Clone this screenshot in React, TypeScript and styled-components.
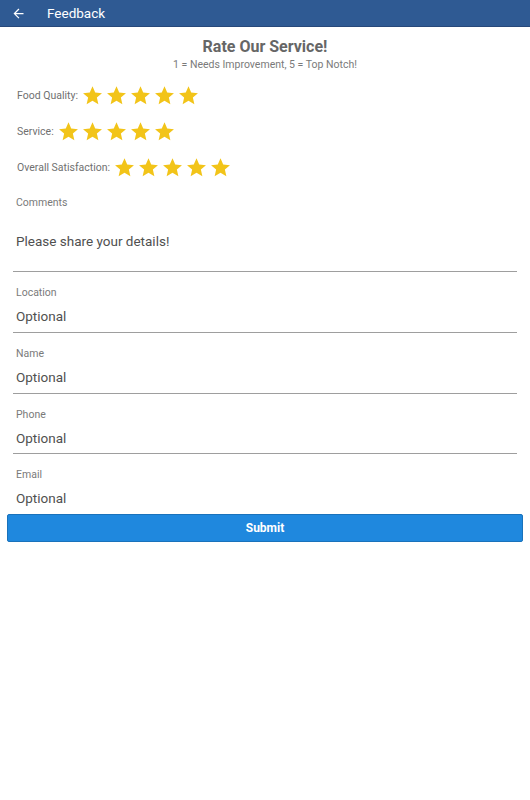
import React from 'react';
import styled, { createGlobalStyle } from 'styled-components';

const GlobalStyle = createGlobalStyle`
  body {
    margin: 0;
    background: #fff;
    font-family: Roboto, "Noto Sans", sans-serif;
  }
`;

const Page = styled.div`
  width: 530px;
  min-height: 800px;
  background: #fff;
`;

const TopBar = styled.div`
  height: 27px;
  background-color: #2f5a93;
  border-bottom: 1px solid #27487a;
  box-sizing: border-box;
  display: flex;
  align-items: center;
  padding-left: 11px;
  color: #fff;

  span {
    font-size: 13.5px;
    margin-left: 21px;
  }
`;

const Heading = styled.div`
  text-align: center;
  padding-top: 10px;

  h1 {
    margin: 0;
    font-size: 16px;
    font-weight: bold;
    color: #666;
    line-height: 20px;
  }

  p {
    margin: 1px 0 0;
    font-size: 10.5px;
    color: #7a7a7a;
    line-height: 14px;
  }
`;

const Ratings = styled.div`
  padding-top: 5px;
`;

const RatingRow = styled.div`
  display: flex;
  align-items: center;
  height: 36px;
  padding-left: 17px;
  font-size: 10.5px;
  color: #707070;
`;

const Stars = styled.div`
  display: flex;
  gap: 3px;
  margin-left: 4px;
`;

const Form = styled.div`
  padding: 0 13px;
`;

const Field = styled.div<{ $tall?: boolean; $last?: boolean; $height: number }>`
  border-bottom: ${p => (p.$last ? 'none' : '1px solid #9e9e9e')};
  padding-left: 3px;
  height: ${p => p.$height}px;
  box-sizing: border-box;
  display: flex;
  flex-direction: column;

  label {
    font-size: 10.5px;
    color: #7a7a7a;
    line-height: 14px;
    margin-top: ${p => (p.$tall ? '11px' : '14px')};
  }

  div {
    font-size: 13.5px;
    color: #505050;
    line-height: 18px;
    margin-top: ${p => (p.$tall ? '22px' : '7px')};
  }
`;

const SubmitButton = styled.button`
  display: block;
  margin: 0 7px;
  width: 516px;
  height: 28px;
  background: #1f88de;
  border: 1px solid #1a72bb;
  border-radius: 2px;
  color: #fff;
  font-family: Roboto, sans-serif;
  font-size: 12px;
  font-weight: bold;
`;

const Star = () => (
  <svg width="21" height="21" viewBox="0 0 24 24">
    <path
      d="M12 1.5l3.1 7.1 7.7.7-5.8 5.1 1.7 7.6L12 18l-6.7 4 1.7-7.6-5.8-5.1 7.7-.7z"
      fill="#f2c419"
    />
  </svg>
);

const ratings = ['Food Quality:', 'Service:', 'Overall Satisfaction:'];
const optionalFields = [
  { label: 'Location', height: 61 },
  { label: 'Name', height: 61 },
  { label: 'Phone', height: 60 },
];

export default function App() {
  return (
    <Page>
      <GlobalStyle />
      <TopBar>
        <svg width="15" height="15" viewBox="0 0 24 24">
          <path d="M20 11H7.8l5.6-5.6L12 4l-8 8 8 8 1.4-1.4L7.8 13H20z" fill="#fff" />
        </svg>
        <span>Feedback</span>
      </TopBar>
      <Heading>
        <h1>Rate Our Service!</h1>
        <p>1 = Needs Improvement, 5 = Top Notch!</p>
      </Heading>
      <Ratings>
        {ratings.map(r => (
          <RatingRow key={r}>
            {r}
            <Stars>
              {[0, 1, 2, 3, 4].map(i => (
                <Star key={i} />
              ))}
            </Stars>
          </RatingRow>
        ))}
      </Ratings>
      <Form>
        <Field $tall $height={87}>
          <label>Comments</label>
          <div>Please share your details!</div>
        </Field>
        {optionalFields.map(f => (
          <Field key={f.label} $height={f.height}>
            <label>{f.label}</label>
            <div>Optional</div>
          </Field>
        ))}
        <Field $last $height={60}>
          <label>Email</label>
          <div>Optional</div>
        </Field>
      </Form>
      <SubmitButton>Submit</SubmitButton>
    </Page>
  );
}
